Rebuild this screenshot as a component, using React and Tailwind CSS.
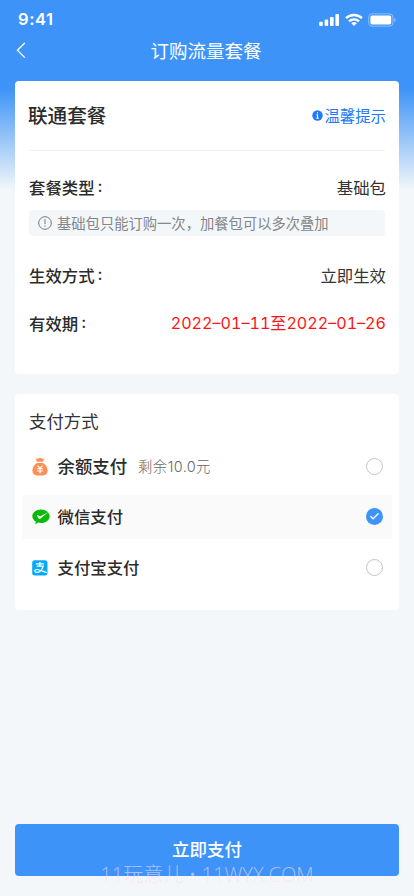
import { Check } from "lucide-react";

function StatusBar() {
  return (
    <div className="flex h-[39px] items-center justify-between pr-[18px] pl-[18px] text-white">
      <span className="font-['Inter',sans-serif] text-[16.5px] font-semibold leading-[39px] tracking-[0.6px]">9:41</span>
      <div className="flex items-center gap-[5px]">
        <svg width="21" height="14" viewBox="0 0 21 14" fill="currentColor">
          <rect x="0.2" y="8.8" width="3.6" height="4.2" rx="0.9" />
          <rect x="5.6" y="6.6" width="3.6" height="6.4" rx="0.9" />
          <rect x="11" y="4" width="3.6" height="9" rx="0.9" />
          <rect x="16.4" y="0.9" width="3.6" height="12.1" rx="0.9" />
        </svg>
        <svg width="18" height="14" viewBox="0 0 18 14" fill="none" stroke="currentColor" strokeWidth="2.3">
          <path d="M1 5.2a11.6 11.6 0 0 1 16 0" />
          <path d="M4 8.4a7.2 7.2 0 0 1 10 0" />
          <path d="M9 13 6.2 10.2a4.1 4.1 0 0 1 5.6 0Z" fill="currentColor" stroke="none" />
        </svg>
        <svg width="28" height="14" viewBox="0 0 28 14" fill="none">
          <rect x="0.7" y="0.9" width="24.2" height="12.2" rx="3.2" stroke="currentColor" strokeOpacity="0.42" />
          <rect x="2.4" y="2.6" width="20.8" height="8.8" rx="1.6" fill="currentColor" />
          <path d="M26.2 5v4c.9-.4 1.4-1.1 1.4-2s-.5-1.6-1.4-2Z" fill="currentColor" fillOpacity="0.45" />
        </svg>
      </div>
    </div>
  );
}

function InfoRow({ label, value, danger }) {
  return (
    <div className="flex h-6 items-center justify-between">
      <span className="flex pb-px text-[16.4px] font-medium leading-6 text-[#2b2b2b]">
        {label}<span className="-mt-px ml-[3px] font-['Inter',sans-serif]">:</span>
      </span>
      <span
        className={
          danger
            ? "-mr-px font-['Inter','Noto_Sans_CJK_SC',sans-serif] text-[16.1px] leading-6 tabular-nums text-[#ff1414]"
            : "-mr-px pb-px text-[16.4px] leading-6 text-[#333]"
        }
      >
        {value}
      </span>
    </div>
  );
}

function MoneyBagIcon() {
  return (
    <svg width="16" height="18" viewBox="0 0 16 18" fill="none">
      <path d="M3.6.4c1.2.4 2 .4 3 0 .9-.4 1.9-.4 2.8 0 1 .4 1.8.4 3 0L11 3.8H5Z" fill="#fd8f59" />
      <path d="M5 5h6c2.8 1.6 4.6 4.5 4.6 7.6 0 3.3-2 4.9-4.6 4.9H5C2.4 17.5.4 15.9.4 12.6.4 9.5 2.2 6.6 5 5Z" fill="#fd8f59" />
      <path d="M5.6 7.6 8 10.4l2.4-2.8M8 10.4v5M5.2 10.8h5.6M5.2 13h5.6" stroke="#fff" strokeWidth="1.1" />
    </svg>
  );
}

function WechatPayIcon() {
  return (
    <svg width="18" height="16" viewBox="0 0 18 16" fill="none">
      <path d="M9 .4c4.8 0 8.7 3 8.700 6.800S13.800 14 9 14c-1 0-2-.1-2.900-.4l-2.700 1.700.3-2.800C1.700 11.300.3 9.400.3 7.200.3 3.400 4.200.4 9 .4Z" fill="#09bb07" />
      <path d="M4.800 6.300c.3-.4.800-.4 1.200-.1L8 7.400 16.400 3 8.300 9.700c-.6.500-1.200.4-1.600-.3Z" fill="#fff" />
    </svg>
  );
}

function AlipayIcon() {
  return (
    <svg width="16" height="16" viewBox="0 0 16 16" fill="none">
      <rect x="0.2" y="0.2" width="15.3" height="15.3" rx="2.5" fill="#06a9f5" />
      <path
        d="M7.900 2v3.800M3.900 3.900h8M4.700 6.100h6.400C10.200 9.500 8 12.400 5 12.400c-2.900 0-2.900-2.900-.3-2.900 2.500 0 5.400 1.600 10.500 3.300"
        stroke="#fff"
        strokeWidth="1.2"
      />
    </svg>
  );
}

function Radio({ checked }) {
  if (checked) {
    return (
      <span className="flex size-[17px] items-center justify-center rounded-full bg-[#3d93f7] text-white">
        <Check size={11} strokeWidth={3} />
      </span>
    );
  }
  return <span className="block size-[17px] rounded-full border border-[#c4c4c4] bg-white" />;
}

function PayRow({ icon, name, note, checked, large }) {
  return (
    <div className={`flex h-[44px] items-center pr-[9.5px] pl-[10px] ${checked ? "bg-[#fafafa]" : ""}`}>
      <span className="flex w-[25.5px] items-center">{icon}</span>
      <span className={`pb-[2px] font-medium text-[#2b2b2b] ${large ? "text-[17.4px]" : "text-[16.4px]"}`}>{name}</span>
      {note && (
        <span className="ml-[11px] font-['Inter','Noto_Sans_CJK_SC',sans-serif] text-[14.4px] font-light tracking-[0.4px] text-[#666]">
          {note}
        </span>
      )}
      <span className="ml-auto pb-px">
        <Radio checked={checked} />
      </span>
    </div>
  );
}

export default function App() {
  return (
    <div className="relative flex h-[896px] w-[414px] flex-col overflow-hidden bg-[#f3f7fa] bg-[linear-gradient(180deg,#3d93f7_0px,#3d93f7_88px,#f3f7fa_190px)] font-['Noto_Sans_CJK_SC',sans-serif]">
      <StatusBar />
      <header className="grid h-[42px] grid-cols-[60px_1fr_60px] items-start text-white">
        <svg width="10" height="17" viewBox="0 0 10 17" fill="none" stroke="currentColor" strokeWidth="1.3" className="mt-[3px] ml-4">
          <path d="M8.800 1 1.400 8.300l7.400 7.300" />
        </svg>
        <h1 className="-mt-px mr-[2px] text-center text-[18.5px] leading-6">订购流量套餐</h1>
      </header>

      <section className="mx-[15px] h-[293px] rounded bg-white px-[14px]">
        <div className="flex h-[70px] items-center justify-between border-b border-[#f3f3f3]">
          <h2 className="-ml-px pb-[2px] text-[19.6px] font-medium text-[#2b2b2b]">联通套餐</h2>
          <span className="-mr-px flex items-center gap-px text-[15.4px] text-[#2378fb]">
            <svg width="11" height="11" viewBox="0 0 11 11">
              <circle cx="5.5" cy="5.5" r="5.2" fill="#2378fb" />
              <path d="M5.500 2.200v1.400M4.500 4.800h1v3.400M4.300 8.200h2.500" stroke="#fff" strokeWidth="1.1" fill="none" />
            </svg>
            温馨提示
          </span>
        </div>
        <div className="pt-6">
          <InfoRow label="套餐类型" value="基础包" />
          <div className="mt-[11px] flex h-[26px] items-center gap-[5px] rounded-sm bg-[#f3f7fa] pl-[9px] text-[14.3px] text-[#848688]">
            <svg width="14" height="14" viewBox="0 0 14 14" fill="none" stroke="#777" strokeWidth="1">
              <circle cx="7" cy="7" r="6.3" />
              <path d="M7 3.200v5M7 9.500v1.300" />
            </svg>
            基础包只能订购一次，加餐包可以多次叠加
          </div>
          <div className="mt-[27px]">
            <InfoRow label="生效方式" value="立即生效" />
          </div>
          <div className="mt-6">
            <InfoRow label="有效期" value="2022–01–11至2022–01–26" danger />
          </div>
        </div>
      </section>

      <section className="mx-[15px] mt-5 h-[216px] rounded bg-white px-[7px] pt-[15px]">
        <h2 className="pl-[7px] text-[17.4px] leading-6 text-[#333]">支付方式</h2>
        <div className="mt-[12px]">
          <PayRow icon={<MoneyBagIcon />} name="余额支付" note="剩余10.0元" large />
        </div>
        <div className="mt-[6px]">
          <PayRow icon={<WechatPayIcon />} name="微信支付" checked />
        </div>
        <div className="mt-[7px]">
          <PayRow icon={<AlipayIcon />} name="支付宝支付" />
        </div>
      </section>

      <button className="mx-[15px] mt-auto mb-5 h-[52px] rounded bg-[#3d93f7] pb-px text-[17.5px] font-medium text-white">
        立即支付
      </button>
      <div className="pointer-events-none absolute inset-x-0 bottom-[7px] text-center font-['Open_Sans','Noto_Sans_CJK_SC',sans-serif] text-[20.1px] font-light leading-7 whitespace-pre text-[#fcdcf5]/60">
        11玩意儿 • 11WYX.COM
      </div>
    </div>
  );
}
